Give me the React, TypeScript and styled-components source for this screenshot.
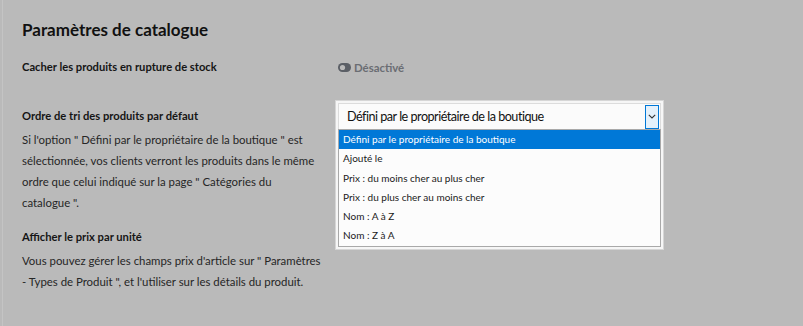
import React from 'react';
import styled, { createGlobalStyle } from 'styled-components';

const GlobalStyle = createGlobalStyle`
  html, body {
    margin: 0;
    padding: 0;
    background: #bababa;
  }
  body {
    font-family: Lato, 'Open Sans', sans-serif;
    color: #1b1b1b;
  }
`;

const Page = styled.div`
  width: 801px;
  height: 326px;
  box-sizing: border-box;
  padding: 18px 0 0 19px;
  border-left: 1px solid #c4c4c4;
  margin-left: 2px;
  overflow: hidden;
`;

const Title = styled.h2`
  margin: 0 0 12px;
  font-size: 17px;
  line-height: 24px;
  font-weight: 700;
  color: #111;
`;

const Setting = styled.div<{ $gap: number }>`
  display: grid;
  grid-template-columns: 313px 1fr;
  align-items: start;
  margin-bottom: ${(p) => p.$gap}px;
`;

const Info = styled.div`
  display: flex;
  flex-direction: column;
`;

const Label = styled.div`
  font-size: 11.2px;
  line-height: 26px;
  font-weight: 700;
  color: #151515;
`;

const Desc = styled.p`
  margin: 0;
  font-size: 11.4px;
  line-height: 21px;
  color: #262626;
  white-space: nowrap;
`;

const Control = styled.div`
  position: relative;
  padding-left: 3px;
`;

const Toggle = styled.div`
  display: flex;
  align-items: center;
  gap: 3px;
  height: 26px;
  font-size: 11.4px;
  font-weight: 700;
  color: #6a6d73;
`;

const Frame = styled.div`
  position: absolute;
  left: 0;
  top: -3px;
  width: 329px;
  box-sizing: border-box;
  border: 1px solid #d6d6d6;
  padding: 2px;
  background: #f6f6f6;
  z-index: 2;
`;

const SelectBox = styled.div`
  display: flex;
  align-items: center;
  justify-content: space-between;
  height: 26px;
  box-sizing: border-box;
  padding: 0 1px 0 8px;
  background: #fbfbfb;
  border: 1px solid #dcdcdc;
  border-bottom: none;
  font-size: 12.6px;
  letter-spacing: -0.5px;
  color: #111;
`;

const ArrowButton = styled.div`
  width: 14px;
  height: 24px;
  box-sizing: border-box;
  border: 1px solid #0078d7;
  background: #e5f1fb;
  display: flex;
  align-items: center;
  justify-content: center;
`;

const List = styled.ul`
  list-style: none;
  margin: 0;
  padding: 0;
  border: 1px solid #a9a9a9;
  background: #fcfcfc;
`;

const Option = styled.li<{ $active?: boolean }>`
  height: 19.3px;
  line-height: 19.3px;
  padding-left: 4px;
  font-size: 10px;
  color: ${(p) => (p.$active ? '#fff' : '#1a1a1a')};
  background: ${(p) => (p.$active ? '#0078d7' : 'transparent')};
`;

const options = [
  'Défini par le propriétaire de la boutique',
  'Ajouté le',
  'Prix : du moins cher au plus cher',
  'Prix : du plus cher au moins cher',
  'Nom : A à Z',
  'Nom : Z à A',
];

const ToggleIcon = () => (
  <svg width="13" height="9" viewBox="0 0 13 9">
    <rect x="0" y="0" width="13" height="9" rx="4.5" fill="#5b5f66" />
    <circle cx="4.5" cy="4.5" r="2.6" fill="#bababa" />
  </svg>
);

const Chevron = () => (
  <svg width="8" height="5" viewBox="0 0 8 5">
    <path d="M0.8 0.8 L4 4 L7.2 0.8" fill="none" stroke="#333" strokeWidth="1.1" />
  </svg>
);

const App: React.FC = () => (
  <>
    <GlobalStyle />
    <Page>
      <Title>Paramètres de catalogue</Title>

      <Setting $gap={23}>
        <Info>
          <Label>Cacher les produits en rupture de stock</Label>
        </Info>
        <Control>
          <Toggle>
            <ToggleIcon />
            Désactivé
          </Toggle>
        </Control>
      </Setting>

      <Setting $gap={11}>
        <Info>
          <Label>Ordre de tri des produits par défaut</Label>
          <Desc>
            Si l'option " Défini par le propriétaire de la boutique " est
            <br />
            sélectionnée, vos clients verront les produits dans le même
            <br />
            ordre que celui indiqué sur la page " Catégories du
            <br />
            catalogue ".
          </Desc>
        </Info>
        <Control>
          <Frame>
            <SelectBox>
              <span>Défini par le propriétaire de la boutique</span>
              <ArrowButton>
                <Chevron />
              </ArrowButton>
            </SelectBox>
            <List>
              {options.map((o, i) => (
                <Option key={o} $active={i === 0}>
                  {o}
                </Option>
              ))}
            </List>
          </Frame>
        </Control>
      </Setting>

      <Setting $gap={0}>
        <Info>
          <Label>Afficher le prix par unité</Label>
          <Desc>
            Vous pouvez gérer les champs prix d'article sur " Paramètres
            <br />- Types de Produit ", et l'utiliser sur les détails du produit.
          </Desc>
        </Info>
      </Setting>
    </Page>
  </>
);

export default App;
